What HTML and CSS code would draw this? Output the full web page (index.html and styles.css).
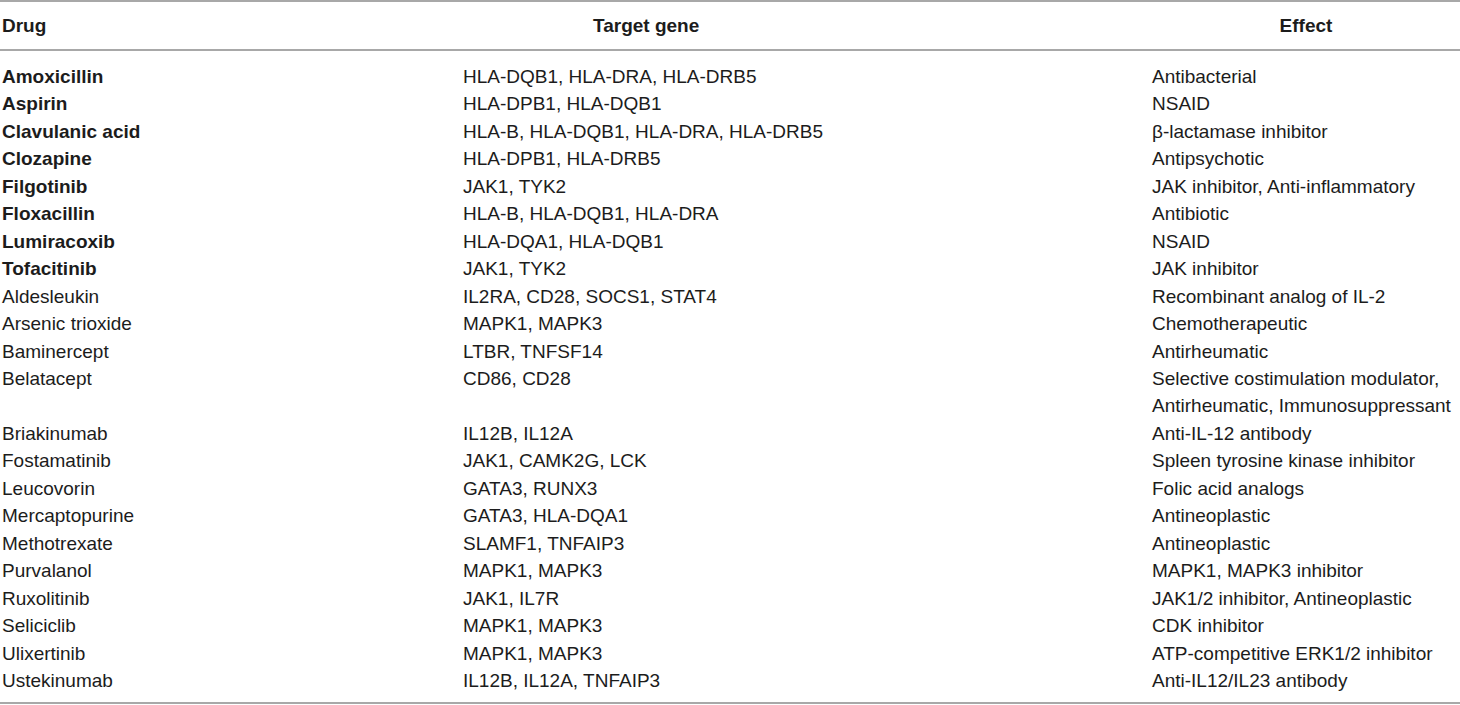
FILE: index.html
```html
<!DOCTYPE html>
<html>
<head>
<meta charset="utf-8">
<link rel="stylesheet" href="styles.css">
</head>
<body>
<div class="table">
  <div class="head">
    <div class="h drug">Drug</div>
    <div class="h gene">Target gene</div>
    <div class="h effect">Effect</div>
  </div>
  <div class="body">
    <div class="c b">Amoxicillin</div><div class="c">HLA-DQB1, HLA-DRA, HLA-DRB5</div><div class="c">Antibacterial</div>
    <div class="c b">Aspirin</div><div class="c">HLA-DPB1, HLA-DQB1</div><div class="c">NSAID</div>
    <div class="c b">Clavulanic acid</div><div class="c">HLA-B, HLA-DQB1, HLA-DRA, HLA-DRB5</div><div class="c">β-lactamase inhibitor</div>
    <div class="c b">Clozapine</div><div class="c">HLA-DPB1, HLA-DRB5</div><div class="c">Antipsychotic</div>
    <div class="c b">Filgotinib</div><div class="c">JAK1, TYK2</div><div class="c">JAK inhibitor, Anti-inflammatory</div>
    <div class="c b">Floxacillin</div><div class="c">HLA-B, HLA-DQB1, HLA-DRA</div><div class="c">Antibiotic</div>
    <div class="c b">Lumiracoxib</div><div class="c">HLA-DQA1, HLA-DQB1</div><div class="c">NSAID</div>
    <div class="c b">Tofacitinib</div><div class="c">JAK1, TYK2</div><div class="c">JAK inhibitor</div>
    <div class="c">Aldesleukin</div><div class="c">IL2RA, CD28, SOCS1, STAT4</div><div class="c">Recombinant analog of IL-2</div>
    <div class="c">Arsenic trioxide</div><div class="c">MAPK1, MAPK3</div><div class="c">Chemotherapeutic</div>
    <div class="c">Baminercept</div><div class="c">LTBR, TNFSF14</div><div class="c">Antirheumatic</div>
    <div class="c">Belatacept</div><div class="c">CD86, CD28</div><div class="c">Selective costimulation modulator,<br>Antirheumatic, Immunosuppressant</div>
    <div class="c">Briakinumab</div><div class="c">IL12B, IL12A</div><div class="c">Anti-IL-12 antibody</div>
    <div class="c">Fostamatinib</div><div class="c">JAK1, CAMK2G, LCK</div><div class="c">Spleen tyrosine kinase inhibitor</div>
    <div class="c">Leucovorin</div><div class="c">GATA3, RUNX3</div><div class="c">Folic acid analogs</div>
    <div class="c">Mercaptopurine</div><div class="c">GATA3, HLA-DQA1</div><div class="c">Antineoplastic</div>
    <div class="c">Methotrexate</div><div class="c">SLAMF1, TNFAIP3</div><div class="c">Antineoplastic</div>
    <div class="c">Purvalanol</div><div class="c">MAPK1, MAPK3</div><div class="c">MAPK1, MAPK3 inhibitor</div>
    <div class="c">Ruxolitinib</div><div class="c">JAK1, IL7R</div><div class="c">JAK1/2 inhibitor, Antineoplastic</div>
    <div class="c">Seliciclib</div><div class="c">MAPK1, MAPK3</div><div class="c">CDK inhibitor</div>
    <div class="c">Ulixertinib</div><div class="c">MAPK1, MAPK3</div><div class="c">ATP-competitive ERK1/2 inhibitor</div>
    <div class="c">Ustekinumab</div><div class="c">IL12B, IL12A, TNFAIP3</div><div class="c">Anti-IL12/IL23 antibody</div>
  </div>
</div>
</body>
</html>
```

FILE: styles.css
```css
html, body {
  margin: 0;
  padding: 0;
  background: #ffffff;
}
body {
  font-family: "Liberation Sans", Arial, sans-serif;
  font-size: 19px;
  color: #1c1c1c;
}
.table {
  width: 1460px;
  border-top: 2px solid #a8a8a8;
  border-bottom: 2px solid #a8a8a8;
}
.head {
  display: grid;
  grid-template-columns: 463px 689px 1fr;
  height: 47px;
  align-items: center;
  border-bottom: 2px solid #a8a8a8;
  font-weight: bold;
}
.h.drug {
  padding-left: 2px;
}
.h.gene {
  padding-left: 130px;
}
.h.effect {
  text-align: center;
}
.body {
  display: grid;
  grid-template-columns: 463px 689px 1fr;
  padding: 12px 0 8px;
  line-height: 27.45px;
}
.c {
  white-space: nowrap;
}
.c:nth-child(3n+1) {
  padding-left: 2px;
}
.b {
  font-weight: bold;
}
```
